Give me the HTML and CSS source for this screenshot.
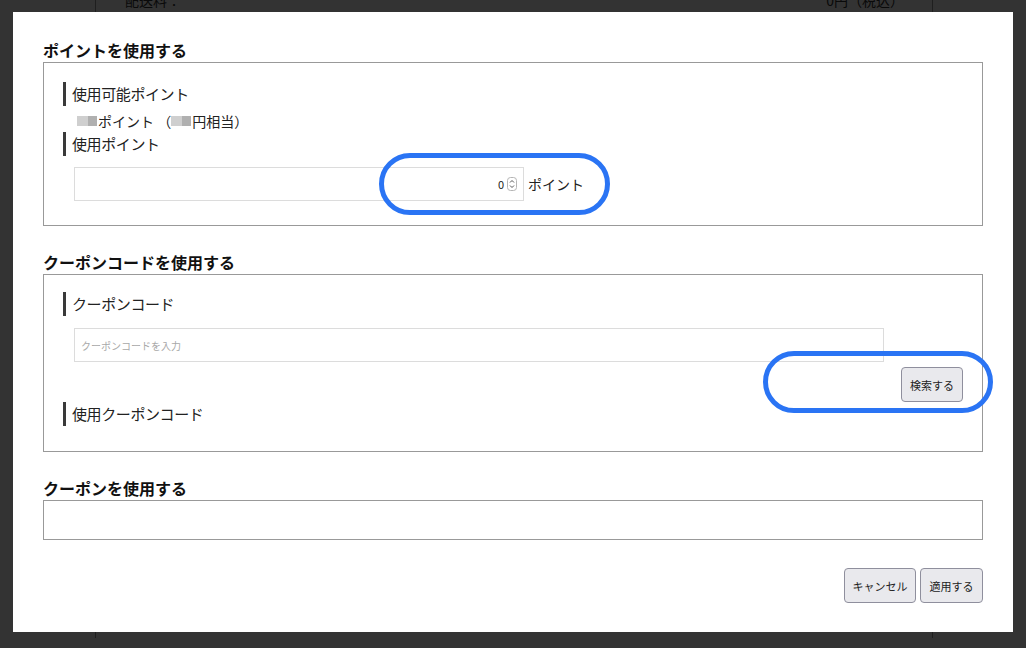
FILE: index.html
```html
<!DOCTYPE html>
<html lang="ja">
<head>
<meta charset="utf-8">
<title>ポイント・クーポン</title>
<link rel="stylesheet" href="styles.css">
</head>
<body>
<div class="page">
  <div class="page-row">
    <span class="page-label">配送料：</span>
    <span class="page-value">0円（税込）</span>
  </div>
  <div class="page-note">※離島・一部地域は追加送料がかかる場合があります。詳細はご利用ガイドの配送についてをご確認ください。</div>
</div>

<div class="overlay"></div>

<div class="modal">
  <section class="section">
    <h2 class="section-title">ポイントを使用する</h2>
    <div class="box box-points">
      <div class="label">使用可能ポイント</div>
      <div class="value"><span class="blur b1"></span><span class="blur b2"></span>ポイント （<span class="blur b1"></span><span class="blur b2"></span>円相当）</div>
      <div class="label">使用ポイント</div>
      <div class="input-row">
        <div class="input num-input">
          <span class="num">0</span>
          <svg class="spin" width="10" height="14" viewBox="0 0 10 14"><rect x="0.5" y="0.5" width="9" height="13" rx="3" fill="#fff" stroke="#b5b5b5"/><path d="M3 5.5 L5 3.5 L7 5.5" fill="none" stroke="#555" stroke-width="1"/><path d="M3 8.5 L5 10.5 L7 8.5" fill="none" stroke="#555" stroke-width="1"/></svg>
        </div>
        <span class="unit">ポイント</span>
      </div>
    </div>
  </section>

  <section class="section">
    <h2 class="section-title">クーポンコードを使用する</h2>
    <div class="box box-coupon">
      <div class="label">クーポンコード</div>
      <div class="input wide-input"><span class="placeholder">クーポンコードを入力</span></div>
      <div class="btn-row"><button class="btn btn-search">検索する</button></div>
      <div class="label">使用クーポンコード</div>
    </div>
  </section>

  <section class="section">
    <h2 class="section-title">クーポンを使用する</h2>
    <div class="box box-empty"></div>
  </section>

  <div class="footer">
    <button class="btn btn-cancel">キャンセル</button>
    <button class="btn btn-apply">適用する</button>
  </div>

  <div class="ring ring-points"></div>
  <div class="ring ring-search"></div>
</div>
</body>
</html>
```

FILE: styles.css
```css
* { box-sizing: border-box; }

html, body {
  margin: 0;
  padding: 0;
  width: 1026px;
  height: 648px;
  overflow: hidden;
  background: #fff;
  font-family: "Noto Sans CJK JP", "Noto Sans", sans-serif;
  color: #333;
}

.page {
  width: 838px;
  height: 648px;
  margin-left: 95px;
  border-left: 1px solid #999;
  border-right: 1px solid #999;
  padding: 0 26px 0 29px;
}

.page-row {
  display: flex;
  justify-content: space-between;
  margin-top: -10px;
  font-size: 14px;
  line-height: 20px;
  color: #333;
}

.page-value { margin-right: 2px; }

.page-note {
  margin: 1px 0 0 140px;
  font-size: 11px;
  line-height: 14px;
  white-space: nowrap;
  color: #555;
}

.overlay {
  position: fixed;
  inset: 0;
  background: rgba(0, 0, 0, 0.8);
}

.modal {
  position: fixed;
  left: 13px;
  top: 12px;
  width: 1000px;
  height: 620px;
  background: #fff;
  padding: 29px 30px 0 30px;
  color: #222;
}

.section { margin-bottom: 27px; }

.section-title {
  margin: 0 0 2px;
  font-size: 16px;
  font-weight: 700;
  line-height: 19px;
  color: #111;
}

.box {
  border: 1px solid #999;
  padding: 19px 19px 24px 19px;
}

.label {
  border-left: 3px solid #3a3a3a;
  padding-left: 6px;
  font-size: 15px;
  line-height: 24px;
  color: #222;
  letter-spacing: -0.4px;
}

.value {
  display: flex;
  align-items: center;
  height: 26px;
  padding-left: 14px;
  padding-top: 4px;
  font-size: 14px;
  color: #222;
}

.blur {
  display: inline-block;
  height: 10px;
}
.blur.b1 { background: #cfcfcf; width: 11px; }
.blur.b2 { background: #b0b0b0; width: 9px; margin-right: 1px; }

.input-row {
  display: flex;
  align-items: center;
  margin: 11px 0 0 11px;
}

.input {
  height: 34px;
  border: 1px solid #dcdcdc;
  background: #fff;
  display: flex;
  align-items: center;
}

.num-input {
  width: 450px;
  justify-content: flex-end;
  padding-right: 6px;
  gap: 3px;
}

.num { font-size: 11px; color: #222; }

.spin { display: block; }

.unit {
  margin-left: 4px;
  font-size: 14px;
  color: #222;
}

.box-coupon { padding: 17px 19px 25px 19px; }

.wide-input {
  width: 810px;
  margin: 12px 0 0 11px;
  padding-left: 6px;
}

.placeholder {
  font-size: 10px;
  color: #a8a8a8;
}

.btn-row {
  display: flex;
  justify-content: flex-end;
  margin-top: 5px;
}

.btn {
  font-family: "Noto Sans CJK JP", "Noto Sans", sans-serif;
  font-size: 11px;
  color: #222;
  background: #e9e9ed;
  border: 1px solid #8f8f9d;
  border-radius: 4px;
  height: 35px;
  padding: 0;
}

.btn-search { width: 62px; }

.box-empty {
  height: 40px;
  padding: 0;
}

.section:nth-of-type(3) { margin-bottom: 28px; }

.footer {
  display: flex;
  justify-content: flex-end;
  gap: 4px;
}

.btn-cancel { width: 72px; }
.btn-apply { width: 63px; }

.ring {
  position: absolute;
  border: 5px solid #2a74f4;
  border-radius: 40px;
}

.ring-points {
  left: 366px;
  top: 141px;
  width: 231px;
  height: 62px;
}

.ring-search {
  left: 750px;
  top: 339px;
  width: 230px;
  height: 62px;
}
```
